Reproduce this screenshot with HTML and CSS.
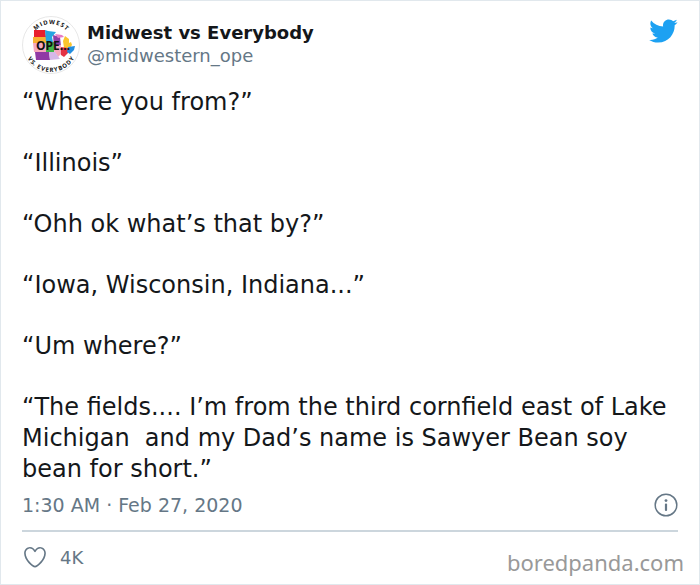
FILE: index.html
```
<!DOCTYPE html>
<html lang="en">
<head>
  <meta charset="UTF-8">
  <title>Midwest vs Everybody</title>
  <link rel="stylesheet" href="styles.css">
</head>
<body>
  <article class="tweet">
    <header class="tweet-header">
      <svg class="avatar" viewBox="0 0 58 58" aria-hidden="true">
        <defs>
          <path id="arc-top" d="M8 29a21 21 0 0 1 42 0"/>
          <path id="arc-bottom" d="M2 29a27 27 0 0 0 54 0"/>
        </defs>
        <circle cx="29" cy="29" r="28.5" fill="#fff" stroke="#dcdcdc" stroke-width=".7"/>
        <path d="M12 14h11l1 7H12z" fill="#e8202c"/>
        <path d="M11 21h13l1 6H11z" fill="#f9b233"/>
        <path d="M11 27h13v9H12z" fill="#f7a8bd"/>
        <path d="M23 14l3 1 8 1-4 5 1 5h-7z" fill="#27a5e0"/>
        <path d="M24 26h8l2 3-2 7h-8z" fill="#43b649"/>
        <path d="M31 19l7 2 1 9-7 1z" fill="#8e3fa8"/>
        <path d="M33 18l7 1 2 2-6 1z" fill="#e77bc4"/>
        <path d="M43 20l4 3v4l2-1 1 3-2 3h-6l-1-7z" fill="#fbc52d"/>
        <path d="M33 29h6v9l-3 3-4-6z" fill="#f7a8bd"/>
        <path d="M39 31l7 1v5l-4 4-3-2z" fill="#e53344"/>
        <path d="M46 31l7-1-1 4-4 4-3-2z" fill="#238ee0"/>
        <path d="M13 36h14l1 8H14z" fill="#9139a5"/>
        <path d="M27 36h6l5 7-10 1z" fill="#d5b8e8"/>
        <text class="avatar-name" x="14" y="34">OPE...</text>
        <text class="avatar-ring"><textPath href="#arc-top" startOffset="50%" text-anchor="middle">M&#8201;I&#8201;D&#8201;W&#8201;E&#8201;S&#8201;T</textPath></text>
        <text class="avatar-ring"><textPath href="#arc-bottom" startOffset="50%" text-anchor="middle">V&#8201;S. &#160;E&#8201;V&#8201;E&#8201;R&#8201;Y&#8201;B&#8201;O&#8201;D&#8201;Y</textPath></text>
      </svg>
      <div class="author">
        <span class="author-name">Midwest vs Everybody</span>
        <a class="author-handle" href="#">@midwestern_ope</a>
      </div>
      <a class="bird" href="#" aria-label="Twitter">
        <svg viewBox="0 0 24 24"><path d="M23.643 4.937c-.835.37-1.732.62-2.675.733.962-.576 1.7-1.49 2.048-2.578-.9.534-1.897.922-2.958 1.13-.85-.904-2.06-1.47-3.4-1.47-2.572 0-4.658 2.086-4.658 4.66 0 .364.042.718.12 1.06-3.873-.195-7.304-2.05-9.602-4.868-.4.69-.63 1.49-.63 2.342 0 1.616.823 3.043 2.072 3.878-.764-.025-1.482-.234-2.11-.583v.06c0 2.257 1.605 4.14 3.737 4.568-.392.106-.803.162-1.227.162-.3 0-.593-.028-.877-.082.593 1.85 2.313 3.198 4.352 3.234-1.595 1.25-3.604 1.995-5.786 1.995-.376 0-.747-.022-1.112-.065 2.062 1.323 4.51 2.093 7.14 2.093 8.57 0 13.255-7.098 13.255-13.254 0-.2-.005-.402-.014-.602.91-.658 1.7-1.477 2.323-2.41z"/></svg>
      </a>
    </header>

    <div class="tweet-text">
      <p>“Where you from?”</p>
      <p>“Illinois”</p>
      <p>“Ohh ok what’s that by?”</p>
      <p>“Iowa, Wisconsin, Indiana...”</p>
      <p>“Um where?”</p>
      <p>“The fields.... I’m from the third cornfield east of Lake Michigan  and my Dad’s name is Sawyer Bean soy bean for short.”</p>
    </div>

    <div class="tweet-meta">
      <a class="date" href="#">1:30 AM · Feb 27, 2020</a>
      <a class="info" href="#" aria-label="Info">
        <svg viewBox="0 0 24 24">
          <circle cx="12" cy="12" r="10.8" fill="none" stroke="currentColor" stroke-width="1.5"/>
          <circle cx="12" cy="7.6" r="1.4"/>
          <rect x="10.9" y="10.4" width="2.2" height="7.6" rx="1"/>
        </svg>
      </a>
    </div>

    <footer class="tweet-footer">
      <button class="like" type="button">
        <svg viewBox="0 0 24 24" aria-hidden="true"><path d="M12 21.638h-.014C9.403 21.59 1.95 14.856 1.95 8.478c0-3.064 2.525-5.754 5.403-5.754 2.29 0 3.83 1.58 4.646 2.73.814-1.148 2.354-2.73 4.645-2.73 2.88 0 5.404 2.69 5.404 5.755 0 6.376-7.454 13.11-10.037 13.157H12zM7.354 4.225c-2.08 0-3.903 1.988-3.903 4.255 0 5.74 7.034 11.596 8.55 11.658 1.518-.062 8.55-5.917 8.55-11.658 0-2.267-1.823-4.255-3.903-4.255-2.528 0-3.94 2.936-3.952 2.965-.23.562-1.156.562-1.387 0-.014-.03-1.425-2.965-3.954-2.965z"/></svg>
        4K
      </button>
      <span class="credit">boredpanda.com</span>
    </footer>
  </article>
</body>
</html>
```
FILE: styles.css
```
* {
  box-sizing: border-box;
}
body {
  margin: 0;
  background: #fff;
  color: #14171a;
  font-family: "DejaVu Sans", Verdana, sans-serif;
}
a {
  color: inherit;
  text-decoration: none;
}
svg {
  display: block;
  fill: currentColor;
}
.tweet {
  min-height: 100vh;
  padding: 15px 15px 0 21px;
  border: 1px solid #e1e8ed;
}
.tweet-header,
.tweet-text,
.tweet-meta {
  margin-right: 6px;
}
.tweet-header {
  display: flex;
  align-items: flex-start;
  gap: 7px;
}
.avatar {
  width: 58px;
  height: 58px;
}
.avatar-name {
  font: bold 12px "Open Sans", sans-serif;
  fill: #111;
}
.avatar-ring {
  font: bold 6px "Open Sans", sans-serif;
  fill: #111;
}
.author {
  display: flex;
  flex-direction: column;
  flex: 1;
  padding-top: 5px;
  font-size: 18px;
  line-height: 23px;
}
.author-name {
  font-weight: bold;
}
.author-handle {
  color: #657786;
}
.bird {
  color: #1da1f2;
}
.bird svg {
  width: 30px;
  height: 30px;
}
.tweet-text {
  display: flex;
  flex-direction: column;
  gap: 30px;
  padding-top: 13px;
  font-size: 24px;
  line-height: 31px;
}
.tweet-text p {
  margin: 0;
  white-space: pre-wrap;
}
.tweet-meta {
  display: flex;
  align-items: center;
  justify-content: space-between;
  padding: 8px 0 13px;
  border-bottom: 2px solid #ccd6dd;
  color: #657786;
  font-size: 19px;
}
.info svg {
  width: 24px;
  height: 24px;
}
.tweet-footer {
  display: flex;
  align-items: flex-start;
  justify-content: space-between;
  padding-top: 12px;
  color: #657786;
}
.like {
  display: flex;
  align-items: center;
  gap: 12px;
  padding: 0;
  border: 0;
  background: none;
  color: inherit;
  font: inherit;
  font-size: 18px;
  cursor: pointer;
}
.like svg {
  width: 26px;
  height: 26px;
}
.credit {
  padding-top: 3px;
  color: #999;
  font-family: "Noto Sans", sans-serif;
  font-size: 22px;
  line-height: 31px;
}
```
